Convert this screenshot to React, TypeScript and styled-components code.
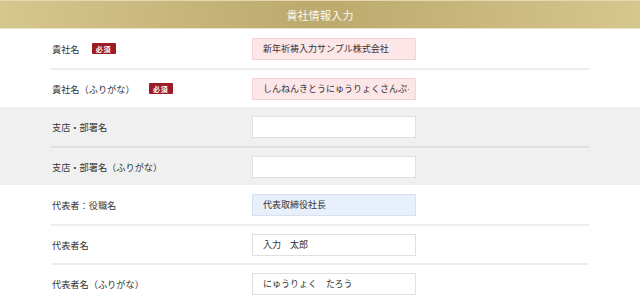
import React from "react";
import styled, { createGlobalStyle } from "styled-components";

const Global = createGlobalStyle`
  html, body { margin: 0; padding: 0; background: #fff; }
  body { font-family: "Noto Sans CJK JP", "Noto Sans", sans-serif; color: #333; }
`;

const Page = styled.div`
  width: 640px;
`;

const Header = styled.div`
  height: 27px;
  border-top: 1px solid #e4d9ad;
  border-bottom: 1px solid #efe6c6;
  background: linear-gradient(90deg, #d6c78f 0%, #bba96d 50%, #d6c78f 100%);
  display: flex;
  align-items: center;
  justify-content: center;
  color: #fbf8ee;
  font-size: 11px;
  letter-spacing: 0.2px;
`;

const Group = styled.div<{ $gray?: boolean }>`
  background: ${(p) => (p.$gray ? "#f0f0f0" : "#ffffff")};
`;

const Inner = styled.div`
  width: 538px;
  margin: 0 auto;
`;

const Row = styled.div`
  height: 39px;
  display: flex;
  align-items: center;
  box-sizing: border-box;
  & + & {
    border-top: 2px solid rgba(0, 0, 0, 0.065);
  }
`;

const LabelCell = styled.div`
  width: 201px;
  padding-left: 1px;
  box-sizing: border-box;
  display: flex;
  align-items: center;
  font-size: 9.2px;
  color: #333;
`;

const Badge = styled.span<{ $gap: number }>`
  display: inline-flex;
  align-items: center;
  justify-content: center;
  margin-left: ${(p) => p.$gap}px;
  width: 24px;
  height: 11px;
  background: #9c1d25;
  color: #fff;
  font-size: 7px;
  font-weight: 700;
  border-radius: 1px;
  letter-spacing: 0.8px;
`;

type Tone = "pink" | "blue" | "white";

const tones: Record<Tone, { bg: string; bd: string }> = {
  pink: { bg: "#fde6e8", bd: "#f3d3d6" },
  blue: { bg: "#e8f0fc", bd: "#d7e1ef" },
  white: { bg: "#ffffff", bd: "#e0e0e0" },
};

const Field = styled.input<{ $tone: Tone }>`
  width: 164px;
  height: 22px;
  box-sizing: border-box;
  border: 1px solid ${(p) => tones[p.$tone].bd};
  background: ${(p) => tones[p.$tone].bg};
  padding: 0 6px 0 10px;
  font-family: "Noto Sans CJK JP", "Noto Sans", sans-serif;
  font-size: 9px;
  color: #333;
  outline: none;
  border-radius: 0;
`;

type Item = { label: string; required?: boolean; gap?: number; value: string; tone: Tone };

const groups: { gray?: boolean; items: Item[] }[] = [
  {
    items: [
      { label: "貴社名", required: true, gap: 12, value: "新年祈祷入力サンプル株式会社", tone: "pink" },
      {
        label: "貴社名（ふりがな）",
        required: true,
        gap: 14,
        value: "しんねんきとうにゅうりょくさんぷるかぶしきがいしゃ",
        tone: "pink",
      },
    ],
  },
  {
    gray: true,
    items: [
      { label: "支店・部署名", value: "", tone: "white" },
      { label: "支店・部署名（ふりがな）", value: "", tone: "white" },
    ],
  },
  {
    items: [
      { label: "代表者：役職名", value: "代表取締役社長", tone: "blue" },
      { label: "代表者名", value: "入力　太郎", tone: "white" },
      { label: "代表者名（ふりがな）", value: "にゅうりょく　たろう", tone: "white" },
    ],
  },
];

export default function App() {
  return (
    <Page>
      <Global />
      <Header>貴社情報入力</Header>
      {groups.map((g, gi) => (
        <Group key={gi} $gray={g.gray}>
          <Inner>
            {g.items.map((it, i) => (
              <Row key={i}>
                <LabelCell>
                  {it.label}
                  {it.required && <Badge $gap={it.gap ?? 12}>必須</Badge>}
                </LabelCell>
                <Field $tone={it.tone} defaultValue={it.value} readOnly />
              </Row>
            ))}
          </Inner>
        </Group>
      ))}
    </Page>
  );
}
